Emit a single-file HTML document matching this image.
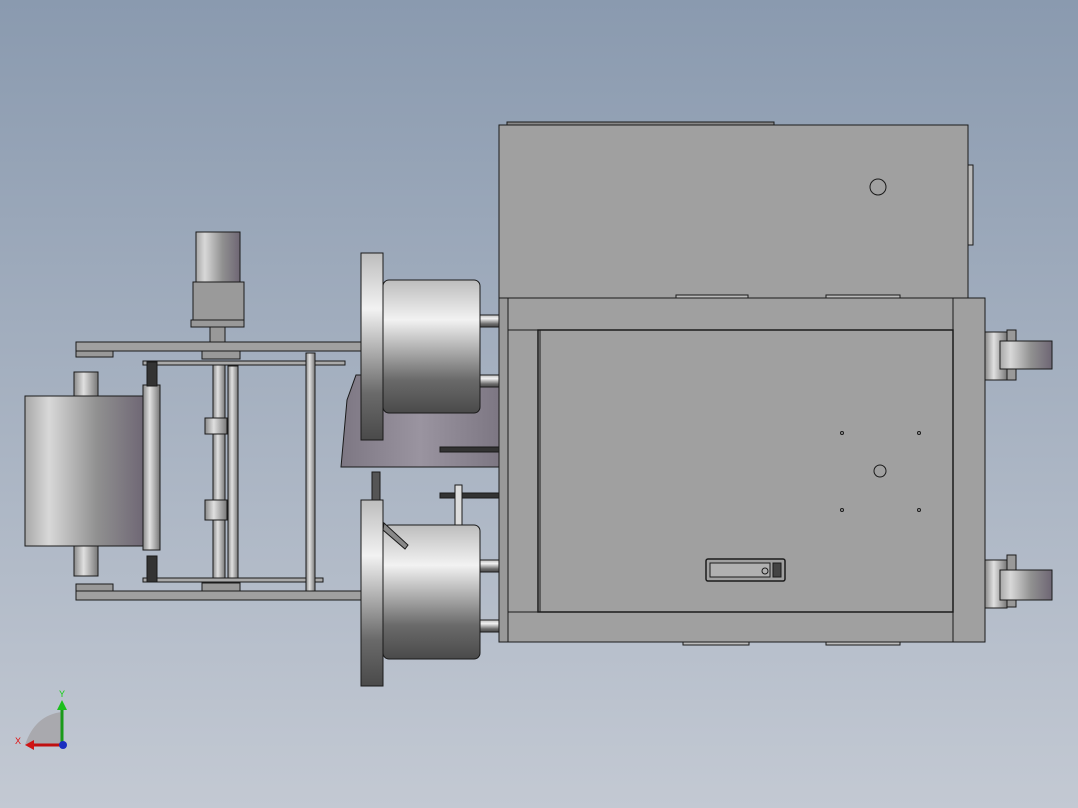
<!DOCTYPE html>
<html><head><meta charset="utf-8"><style>
html,body{margin:0;padding:0;width:1078px;height:808px;overflow:hidden}
svg{display:block}
</style></head><body>
<svg width="1078" height="808" viewBox="0 0 1078 808" xmlns="http://www.w3.org/2000/svg">
<defs>
<linearGradient id="bg" x1="0" y1="0" x2="0" y2="1">
<stop offset="0" stop-color="#8a9aaf"/><stop offset="1" stop-color="#c3c9d3"/></linearGradient>
<linearGradient id="cylH" x1="0" y1="0" x2="1" y2="0">
<stop offset="0" stop-color="#a8a8a8"/><stop offset="0.2" stop-color="#d8d8d8"/><stop offset="0.6" stop-color="#909090"/><stop offset="1" stop-color="#6e6674"/></linearGradient>
<linearGradient id="cylV" x1="0" y1="0" x2="0" y2="1">
<stop offset="0" stop-color="#bdbdbd"/><stop offset="0.3" stop-color="#f2f2f2"/><stop offset="0.75" stop-color="#6a6a6a"/><stop offset="1" stop-color="#4a4a4a"/></linearGradient>
<linearGradient id="rod" x1="0" y1="0" x2="1" y2="0">
<stop offset="0" stop-color="#8a8a8a"/><stop offset="0.4" stop-color="#e0e0e0"/><stop offset="1" stop-color="#777"/></linearGradient>
<linearGradient id="dark" x1="0" y1="0" x2="1" y2="0">
<stop offset="0" stop-color="#7d7783"/><stop offset="0.5" stop-color="#9a94a0"/><stop offset="1" stop-color="#7d7783"/></linearGradient>
</defs>
<rect width="1078" height="808" fill="url(#bg)"/>
<g stroke="#1a1a1a" stroke-width="1">
<rect x="507" y="122" width="267" height="3" fill="#888"/>
<rect x="499" y="125" width="469" height="173" fill="#a0a0a0"/>
<rect x="968" y="165" width="5" height="80" fill="#bbb"/>
<circle cx="878" cy="187" r="8" fill="none"/>
<rect x="499" y="298" width="486" height="344" fill="#a0a0a0"/>
<rect x="499" y="298" width="9" height="344" fill="#999"/>
<line x1="508" y1="330" x2="953" y2="330"/>
<line x1="508" y1="612" x2="953" y2="612"/>
<line x1="953" y1="298" x2="953" y2="642"/>
<rect x="538" y="330" width="415" height="282" fill="#a0a0a0" stroke-width="1.5"/>
<line x1="540" y1="330" x2="540" y2="612"/>
<circle cx="880" cy="471" r="6" fill="none"/>
<circle cx="842" cy="433" r="1.5" fill="none"/><circle cx="919" cy="433" r="1.5" fill="none"/>
<circle cx="842" cy="510" r="1.5" fill="none"/><circle cx="919" cy="510" r="1.5" fill="none"/>
<rect x="706" y="559" width="79" height="22" rx="2" fill="#a0a0a0" stroke-width="1.5"/>
<rect x="710" y="563" width="60" height="14" fill="#b0b0b0"/>
<circle cx="765" cy="571" r="3" fill="none"/>
<rect x="773" y="563" width="8" height="14" fill="#444"/>
<rect x="683" y="642" width="66" height="3" fill="#bbb"/>
<rect x="826" y="642" width="74" height="3" fill="#bbb"/>
<rect x="676" y="295" width="72" height="3" fill="#bbb"/>
<rect x="826" y="295" width="74" height="3" fill="#bbb"/>
<rect x="985" y="332" width="22" height="48" fill="url(#rod)"/>
<rect x="1007" y="330" width="9" height="50" fill="#999"/>
<rect x="1000" y="341" width="52" height="28" fill="url(#cylH)"/>
<rect x="985" y="560" width="22" height="48" fill="url(#rod)"/>
<rect x="1007" y="555" width="9" height="52" fill="#999"/>
<rect x="1000" y="570" width="52" height="30" fill="url(#cylH)"/>
<path d="M341,467 L347,400 L356,375 L499,375 L499,467 Z" fill="url(#dark)"/>
<rect x="480" y="315" width="19" height="12" fill="url(#cylV)"/>
<rect x="480" y="375" width="19" height="12" fill="url(#cylV)"/>
<rect x="480" y="560" width="19" height="12" fill="url(#cylV)"/>
<rect x="480" y="620" width="19" height="12" fill="url(#cylV)"/>
<rect x="440" y="493" width="59" height="5" fill="#333"/>
<rect x="440" y="447" width="59" height="5" fill="#333"/>
<rect x="455" y="485" width="7" height="40" fill="#ddd"/>
<rect x="383" y="280" width="97" height="133" rx="6" fill="url(#cylV)"/>
<rect x="361" y="253" width="22" height="187" fill="url(#cylV)"/>
<rect x="383" y="525" width="97" height="134" rx="6" fill="url(#cylV)"/>
<rect x="361" y="500" width="22" height="186" fill="url(#cylV)"/>
<path d="M384,523 L408,545 L405,549 L383,530 Z" fill="#888"/>
<rect x="196" y="232" width="44" height="50" fill="url(#cylH)"/>
<rect x="193" y="282" width="51" height="38" fill="#9a9a9a"/>
<rect x="191" y="320" width="53" height="7" fill="#999"/>
<rect x="210" y="327" width="15" height="15" fill="#999"/>
<rect x="76" y="342" width="285" height="9" fill="#a0a0a0"/>
<rect x="76" y="591" width="285" height="9" fill="#a0a0a0"/>
<rect x="76" y="351" width="37" height="6" fill="#999"/>
<rect x="76" y="584" width="37" height="7" fill="#999"/>
<rect x="202" y="351" width="38" height="8" fill="#999"/>
<rect x="202" y="583" width="38" height="8" fill="#999"/>
<rect x="143" y="361" width="202" height="4" fill="#aaa"/>
<rect x="143" y="578" width="180" height="4" fill="#aaa"/>
<rect x="74" y="372" width="24" height="24" fill="url(#rod)"/>
<rect x="74" y="546" width="24" height="30" fill="url(#rod)"/>
<rect x="25" y="396" width="120" height="150" fill="url(#cylH)"/>
<rect x="143" y="385" width="17" height="165" fill="url(#rod)"/>
<rect x="147" y="362" width="10" height="24" fill="#333"/>
<rect x="147" y="556" width="10" height="26" fill="#333"/>
<rect x="213" y="365" width="12" height="213" fill="url(#rod)"/>
<rect x="205" y="418" width="22" height="16" fill="url(#rod)"/>
<rect x="205" y="500" width="22" height="20" fill="url(#rod)"/>
<rect x="228" y="366" width="10" height="212" fill="url(#rod)"/>
<rect x="306" y="353" width="9" height="238" fill="url(#rod)"/>
<rect x="372" y="472" width="8" height="28" fill="#555"/>
</g>
<path d="M25,745 Q35,715 62,712 L62,745 Z" fill="#a9a9ae"/>
<line x1="62" y1="745" x2="62" y2="707" stroke="#1a9a1a" stroke-width="3"/>
<path d="M57,710 L62,700 L67,710 Z" fill="#1cbf1c"/>
<line x1="62" y1="745" x2="32" y2="745" stroke="#c01010" stroke-width="3"/>
<path d="M34,740 L25,745 L34,750 Z" fill="#d01414"/>
<circle cx="63" cy="745" r="4" fill="#1a2ec0"/>
<text x="59" y="697" font-family="Liberation Sans, sans-serif" font-size="9" fill="#10d010">Y</text>
<text x="15" y="744" font-family="Liberation Sans, sans-serif" font-size="9" fill="#e01010">X</text>
</svg>
</body></html>
